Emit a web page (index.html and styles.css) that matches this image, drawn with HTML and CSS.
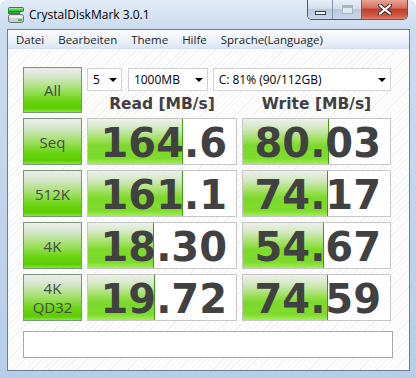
FILE: index.html
```html
<!DOCTYPE html>
<html>

<head>
    <title>CrystalDiskMark 3.0.1</title>
    <meta charset="utf-8">
    <meta name="viewport" content="width=device-width, initial-scale=1.0">
    <link rel="stylesheet" href="styles.css">
</head>

<body>

    <div class="window">
        <div class="titlebar">
            <svg class="appicon" width="16" height="16" viewBox="0 0 16 16">
                <rect x="0.5" y="0.5" width="15" height="4" rx="1" fill="#3fbf3f" stroke="#1f8a2a" />
                <rect x="1" y="1" width="14" height="1.5" fill="#8fe68a" />
                <rect x="0.5" y="4.5" width="11" height="2" fill="#36b23a" stroke="#1f8a2a" />
                <rect x="0.5" y="7.5" width="15" height="8" rx="2" fill="#c9cdd1" stroke="#6d7278" />
                <rect x="1.5" y="8.5" width="13" height="2.5" fill="#eef0f2" />
                <rect x="10" y="12" width="4" height="2" fill="#35c23a" />
            </svg>
            <span class="title">CrystalDiskMark 3.0.1</span>
            <div class="caption">
                <div class="cap min"><span class="minbar"></span></div>
                <div class="cap max"><span class="maxbox"></span></div>
                <div class="cap close">
                    <svg width="14" height="11" viewBox="0 0 14 11">
                        <path d="M2 1.5 L12 9.5 M12 1.5 L2 9.5" stroke="#3a2a28" stroke-width="4" stroke-linecap="square" />
                        <path d="M2 1.5 L12 9.5 M12 1.5 L2 9.5" stroke="#ffffff" stroke-width="2" stroke-linecap="square" />
                    </svg>
                </div>
            </div>
        </div>

        <div class="client">
            <nav class="menubar">
                <span>Datei</span>
                <span>Bearbeiten</span>
                <span>Theme</span>
                <span>Hilfe</span>
                <span>Sprache(Language)</span>
            </nav>

            <section class="panel">
                <div class="board">
                    <div class="test all">All</div>
                    <div class="controls">
                        <div class="selects">
                            <div class="combo count">5<i></i></div>
                            <div class="combo size">1000MB<i></i></div>
                            <div class="combo drive">C: 81% (90/112GB)<i></i></div>
                        </div>
                        <div class="heads">
                            <span>Read [MB/s]</span>
                            <span>Write [MB/s]</span>
                        </div>
                    </div>

                    <div class="test">Seq</div>
                    <div class="cell"><div class="bar" style="width:95px"></div><div class="num">164.6</div></div>
                    <div class="cell"><div class="bar" style="width:86px"></div><div class="num">80.03</div></div>

                    <div class="test">512K</div>
                    <div class="cell"><div class="bar" style="width:95px"></div><div class="num">161.1</div></div>
                    <div class="cell"><div class="bar" style="width:85px"></div><div class="num">74.17</div></div>

                    <div class="test">4K</div>
                    <div class="cell"><div class="bar" style="width:66px"></div><div class="num">18.30</div></div>
                    <div class="cell"><div class="bar" style="width:81px"></div><div class="num">54.67</div></div>

                    <div class="test two">4K<br>QD32</div>
                    <div class="cell"><div class="bar" style="width:67px"></div><div class="num">19.72</div></div>
                    <div class="cell"><div class="bar" style="width:85px"></div><div class="num">74.59</div></div>
                </div>

                <div class="comment"></div>
            </section>
        </div>
    </div>

</body></html>
```

FILE: styles.css
```css
* {
    box-sizing: border-box;
}

body {
    margin: 0;
    font-family: "Open Sans", "Noto Sans", sans-serif;
}

.window {
    width: 416px;
    height: 378px;
    background: linear-gradient(to bottom, #e2ecf7 0px, #cbdcef 29px, #b6cee9 100%);
    border-radius: 6px 6px 0 0;
    padding: 0 6px 7px 7px;
    display: flex;
    flex-direction: column;
}

/* title bar */

.titlebar {
    height: 29px;
    display: flex;
    align-items: center;
    padding-left: 1px;
}

.appicon {
    margin-top: 1px;
}

.title {
    margin-left: 5px;
    font-size: 12px;
    color: #000;
    margin-top: -1px;
}

.caption {
    margin-left: auto;
    margin-right: 2px;
    align-self: flex-start;
    display: flex;
    height: 20px;
    border: 1px solid #4e5d6e;
    border-top: 0;
    border-radius: 0 0 5px 5px;
    overflow: hidden;
}

.cap {
    display: flex;
    align-items: center;
    justify-content: center;
    height: 19px;
    background: linear-gradient(to bottom, #e9eff7 0%, #d3deec 45%, #b9cade 50%, #c8d8ea 100%);
}

.min {
    width: 25px;
    border-right: 1px solid #8797ab;
}

.minbar {
    width: 11px;
    height: 4px;
    margin-top: 6px;
    background: #fff;
    border: 1px solid #2f3e52;
}

.max {
    width: 29px;
    border-right: 1px solid #7d5a56;
}

.maxbox {
    width: 11px;
    height: 9px;
    border: 1px solid #a5b4c6;
    border-top-width: 3px;
    margin-top: -1px;
    background: #dfe7f1;
}

.close {
    width: 45px;
    background: linear-gradient(to bottom, #e6a598 0%, #d7705e 40%, #c0402c 50%, #cf5a46 85%, #e2866e 100%);
}

/* client */

.client {
    flex: 1;
    display: flex;
    flex-direction: column;
    border: 1px solid #6e7f93;
    background: #fff;
}

.menubar {
    height: 19px;
    display: flex;
    align-items: center;
    padding-left: 1px;
    background: linear-gradient(to bottom, #fcfdfe 0%, #eef3fa 50%, #dce6f4 100%);
    border-bottom: 1px solid #d6dfec;
    font-size: 11.5px;
    color: #1e1e1e;
}

.menubar span {
    padding: 0 7px;
}

.panel {
    flex: 1;
    padding: 18px 0 0 15px;
    background: repeating-linear-gradient(135deg, #ffffff 0px, #ffffff 3px, #f1f1f1 3px, #f1f1f1 4px);
}

.board {
    display: grid;
    grid-template-columns: 59px 150px 149px;
    grid-template-rows: 46px repeat(4, 47px);
    column-gap: 5px;
    row-gap: 5px;
}

.test {
    display: flex;
    align-items: center;
    justify-content: center;
    text-align: center;
    border: 1px solid #7a967a;
    background: linear-gradient(to bottom, #eceeea 0%, #d6e6cc 20%, #9ee064 50%, #6ad412 75%, #5ccc00 92%, #86e83a 100%);
    font-size: 15px;
    color: #484848;
}

.test.two {
    line-height: 19px;
    padding-top: 1px;
}

.controls {
    grid-column: 2 / 4;
    display: flex;
    flex-direction: column;
}

.selects {
    display: flex;
    margin-top: 1px;
    height: 23px;
}

.combo {
    display: flex;
    align-items: center;
    height: 23px;
    padding-left: 5px;
    background: #fff;
    border: 1px solid #d2d2d2;
    font-size: 12px;
    color: #000;
}

.combo i {
    margin-left: auto;
    margin-right: 4px;
    border-left: 4px solid transparent;
    border-right: 4px solid transparent;
    border-top: 4px solid #000;
}

.count {
    width: 35px;
}

.size {
    width: 80px;
    margin-left: 6px;
}

.drive {
    width: 179px;
    margin-left: 5px;
}

.heads {
    display: flex;
    column-gap: 5px;
    height: 22px;
    padding-top: 3px;
    align-items: center;
    font-family: "DejaVu Sans", sans-serif;
    font-weight: bold;
    font-size: 15.5px;
    color: #404040;
}

.heads span {
    width: 150px;
    text-align: center;
}

.heads span:last-child {
    width: 149px;
}

.cell {
    display: grid;
    grid-template-rows: 45px;
    border: 1px solid #c6c6c6;
    background: #fff;
}

.bar,
.num {
    grid-area: 1 / 1;
}

.bar {
    height: 45px;
    background: linear-gradient(to bottom, #eef0ec 0%, #d0e8bc 22%, #98e050 48%, #7cd82a 60%, #80dc2c 88%, #a2ee5a 100%);
    border-right: 1px solid #3f9a16;
}

.num {
    font-family: "DejaVu Sans", sans-serif;
    font-weight: bold;
    font-size: 40px;
    line-height: 42px;
    height: 45px;
    padding-top: 3px;
    text-align: right;
    padding-right: 9px;
    color: #414141;
}

.comment {
    width: 370px;
    height: 27px;
    margin-top: 10px;
    background: #fff;
    border: 1px solid #a8a8a8;
}
```
